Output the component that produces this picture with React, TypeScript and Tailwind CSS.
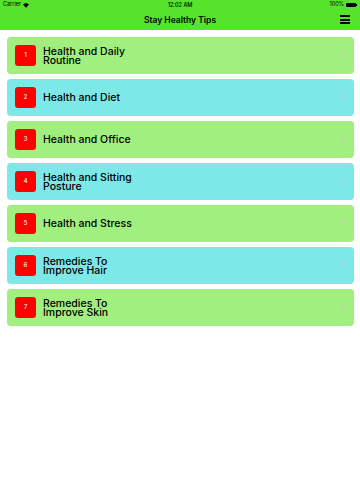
import React from "react";

const items = [
  { n: 1, t: ["Health and Daily", "Routine"], c: "bg-[#a0ef7f]" },
  { n: 2, t: ["Health and Diet"], c: "bg-[#7de8e8]" },
  { n: 3, t: ["Health and Office"], c: "bg-[#a0ef7f]" },
  { n: 4, t: ["Health and Sitting", "Posture"], c: "bg-[#7de8e8]" },
  { n: 5, t: ["Health and Stress"], c: "bg-[#a0ef7f]" },
  { n: 6, t: ["Remedies To", "Improve Hair"], c: "bg-[#7de8e8]" },
  { n: 7, t: ["Remedies To", "Improve Skin"], c: "bg-[#a0ef7f]" },
];

export default function App() {
  return (
    <div className="w-[360px] h-[480px] bg-white" style={{ fontFamily: "Inter, 'Liberation Sans', sans-serif" }}>
      <div className="bg-[#55e32b] h-[30px] relative">
        <div className="h-[10px] flex items-center justify-between px-[3px] text-[5.5px] text-black leading-none">
          <div className="flex items-center gap-[2px]">
            <span>Carrier</span>
            <svg width="6" height="5" viewBox="0 0 12 9">
              <path d="M6 9 L0 2.5 A9 9 0 0 1 12 2.5 Z" fill="black" />
            </svg>
          </div>
          <span className="absolute left-1/2 -translate-x-1/2 top-[2.5px] font-medium">12:02 AM</span>
          <div className="flex items-center gap-[2px]">
            <span>100%</span>
            <div className="flex items-center">
              <div className="w-[10px] h-[4px] bg-black rounded-[1px]" />
              <div className="w-[1px] h-[2px] bg-black" />
            </div>
          </div>
        </div>
        <div className="h-[20px] flex items-center justify-center relative">
          <span className="text-[8.5px] font-semibold text-black">Stay Healthy Tips</span>
          <div className="absolute right-[10px] top-[5px] flex flex-col gap-[1.5px]">
            <div className="w-[10px] h-[2px] bg-black" />
            <div className="w-[10px] h-[2px] bg-black" />
            <div className="w-[10px] h-[2px] bg-black" />
          </div>
        </div>
      </div>
      <div className="flex flex-col gap-[5px] pt-[7px] pl-[7px] pr-[6px]">
        {items.map((it) => (
          <div key={it.n} className={`${it.c} h-[37px] rounded-[4px] flex items-center pl-[8px] pr-[8px]`}>
            <div className="w-[21px] h-[21px] bg-[#ff0000] rounded-[3px] flex items-center justify-center text-white text-[6.5px]">
              {it.n}
            </div>
            <div className="ml-[7px] flex-1 text-[10.5px] font-medium text-black leading-[9px]">
              {it.t.map((l) => (
                <div key={l}>{l}</div>
              ))}
            </div>
            <svg width="4" height="7" viewBox="0 0 4 7" className="mr-[1px]">
              <path d="M0.5 0.5 L3.5 3.5 L0.5 6.5" fill="none" stroke="#c4c4c4" strokeWidth="1" />
            </svg>
          </div>
        ))}
      </div>
    </div>
  );
}
